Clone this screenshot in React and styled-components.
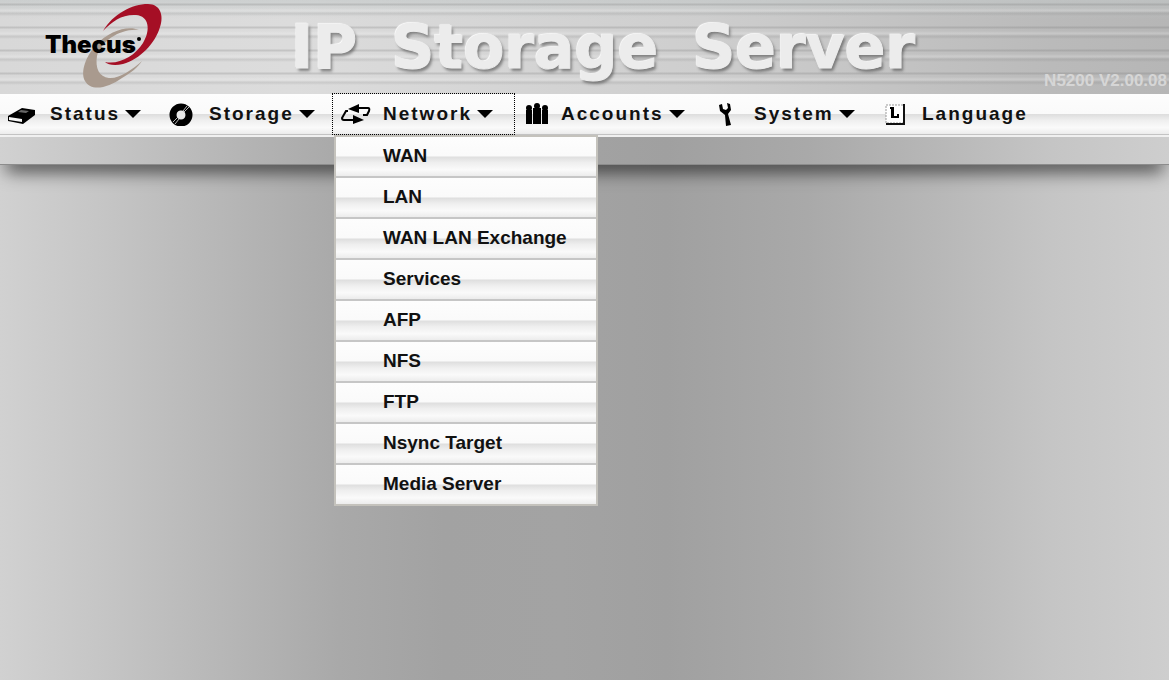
import React from "react"
import styled, { createGlobalStyle, css } from "styled-components"

const steel = css`
  background: linear-gradient(
    to right,
    #d1d1d1 0%,
    #c5c5c5 9%,
    #b4b4b4 21%,
    #a9a9a9 29%,
    #a2a2a2 38%,
    #a3a3a3 48%,
    #a0a0a0 57%,
    #a9a9a9 69%,
    #b7b7b7 80%,
    #c5c5c5 90%,
    #cecece 100%
  );
`

const glossy = css`
  background: linear-gradient(
    to bottom,
    #fdfdfd 0%,
    #fafafa 49%,
    #dedede 51%,
    #efefef 66%,
    #fafafa 84%,
    #ececec 100%
  );
`

const GlobalStyle = createGlobalStyle`
  * {
    box-sizing: border-box;
  }
  body {
    margin: 0;
    font-family: "Liberation Sans", Arial, sans-serif;
    color: #111;
  }
`

const StyledPage = styled.div`
  ${steel}
  min-height: 100vh;
`

const StyledBanner = styled.header`
  display: flex;
  align-items: stretch;
  min-height: 94px;
  padding: 0 2px 0 42px;
  overflow: hidden;
  background:
    repeating-linear-gradient(
      to bottom,
      transparent 0 3px,
      rgba(110, 110, 110, 0.22) 4px 5px,
      transparent 6px 8px,
      rgba(255, 255, 255, 0.18) 10px 11px,
      transparent 12px,
      rgba(110, 110, 110, 0.14) 13px 14px,
      transparent 16px 23px
    ),
    linear-gradient(to bottom, rgba(195, 200, 200, 0.6), transparent 20%),
    linear-gradient(to right, #d8d8d8, #dcdcdc 25%, #cecece 60%, #bababa 90%, #b6b6b6 100%);
`

const StyledLogo = styled.a`
  flex: none;
  width: 249px;
  color: #000;

  svg {
    display: block;
  }
`

const StyledTitle = styled.h1`
  display: flex;
  flex: 1;
  align-items: center;
  gap: 34px;
  margin: 0;
  font-family: "DejaVu Sans", "Arial Black", sans-serif;
  font-size: 60px;
  font-weight: bold;
  line-height: 94px;
  white-space: nowrap;
  color: #ececec;
  -webkit-text-stroke: 1px #ececec;
  text-shadow: 2px 3px 3px rgba(70, 70, 70, 0.6), -1px -1px 1px #fff;
`

const StyledVersion = styled.span`
  align-self: flex-end;
  padding-bottom: 4px;
  font-size: 17px;
  font-weight: bold;
  line-height: 18px;
  white-space: nowrap;
  color: #d6d6d6;
`

const StyledNav = styled.nav`
  border-bottom: 2px solid #f2f2f2;
`

const StyledMenu = styled.ul`
  ${glossy}
  display: flex;
  height: 41px;
  margin: 0;
  padding: 0;
  border-bottom: 1px solid #c4c4c4;
  list-style: none;
`

const StyledMenuItem = styled.li`
  position: relative;
  flex: none;
  width: ${({ $width }) => $width}px;
`

const StyledMenuButton = styled.button`
  display: flex;
  align-items: center;
  width: 100%;
  height: 40px;
  padding: 0 0 0 ${({ $inset }) => $inset}px;
  border: 0;
  background: none;
  font: bold 19px/40px "Liberation Sans", Arial, sans-serif;
  letter-spacing: 2px;
  white-space: nowrap;
  color: #111;
  outline: ${({ $open }) => ($open ? "1px dotted #000" : "none")};
`

const StyledIcon = styled.svg`
  flex: none;
  width: 30px;
  height: 24px;
  margin-right: ${({ $gap }) => $gap}px;
`

const StyledCaret = styled.span`
  margin-left: 5px;
  border: 8px solid transparent;
  border-top-color: #000;
  border-bottom: 0;
`

const StyledDropdown = styled.ul`
  position: absolute;
  z-index: 1;
  top: 41px;
  left: 1px;
  width: 264px;
  margin: 0;
  padding: 0;
  border: 2px solid #c4c2bc;
  list-style: none;
`

const StyledDropdownItem = styled.li`
  ${glossy}
  height: 41px;
  border-bottom: 2px solid #c6c6c6;

  &:last-child {
    height: 39px;
    border-bottom: 0;
  }
`

const StyledDropdownLink = styled.a`
  display: block;
  padding-left: 47px;
  font-size: 19px;
  font-weight: bold;
  line-height: 38px;
  white-space: nowrap;
  text-decoration: none;
  color: #111;
`

const StyledStrip = styled.div`
  ${steel}
  height: 28px;
  border-bottom: 1px solid #8c8c8c;
  box-shadow: 0 12px 18px -6px rgba(0, 0, 0, 0.7);
`

const Logo = () => (
  <svg width="130" height="94" viewBox="42 0 130 94" role="img" aria-label="Thecus">
    <path
      d="M139 30C128 25 109 31 96 45C86 56 80 72 85 81C91 92 108 88 122 78C131 73 138 67 142 61C133 69 119 79 109 78C99 77 95 68 97 56C101 41 121 28 139 30Z"
      fill="#a99a8e"
    />
    <path
      d="M103 31C113 14 132 4 148 4C160 4 164 15 160 27C155 44 140 59 123 64C115 66 108 65 105 62C119 65 135 56 143 43C151 30 149 16 136 15C123 14 112 21 103 31Z"
      fill="#a50f25"
    />
    <text
      x="45"
      y="53"
      fontFamily="Inter, Arial, sans-serif"
      fontSize="24"
      fontWeight="900"
    >
      Thecus
    </text>
    <circle cx="139" cy="39" r="2" />
  </svg>
)

const icons = {
  status: (
    <>
      <path d="M1 14L15 6L28 8V13L16 22L1 19Z" />
      <path d="M2 15L15 17V20L2 18Z" fill="#f5f5f5" />
      <path d="M14 8L22 9L19 11L11 10Z" fill="#666" />
    </>
  ),
  storage: (
    <>
      <circle cx="16" cy="13" r="8" fill="none" stroke="#000" strokeWidth="7" />
      <path d="M8 20L13 15M10 22L14 17M19 10L24 5M18 9L22 4" stroke="#bbb" />
      <circle cx="16" cy="13" r="4" fill="#e8e8e8" />
    </>
  ),
  network: (
    <>
      <path d="M14 6H27Q29 6 28 9L26 13H22" fill="none" stroke="#000" strokeWidth="2" />
      <path d="M7 7L18 2V11Z" />
      <path d="M7 9H5L1 16Q1 18 3 18H14" fill="none" stroke="#000" strokeWidth="2" />
      <path d="M23 18L12 13V22Z" />
    </>
  ),
  accounts: (
    <>
      <circle cx="7" cy="6" r="3" />
      <circle cx="15" cy="4" r="3" />
      <circle cx="23" cy="6" r="3" />
      <path d="M4 8H10V22H4ZM11 6H19V22H11ZM20 8H26V22H20Z" />
    </>
  ),
  system: (
    <path d="M9 3L12 2L13 7L16 8L18 6L17 1L20 2L21 8L18 12L21 23L16 24L15 13L10 9Z" />
  ),
  language: (
    <>
      <path d="M6 3H24V21H6Z" fill="#fff" stroke="#999" strokeDasharray="2 1" />
      <path d="M24 2V22H6" fill="none" stroke="#111" strokeWidth="2" />
      <path d="M12 5V15H18V12M10 6H14" fill="none" stroke="#000" strokeWidth="2" />
      <path d="M11 5H14V16H11Z" />
    </>
  ),
}

const menu = [
  { icon: "status", label: "Status", width: 165, inset: 7, gap: 13 },
  { icon: "storage", label: "Storage", width: 168, inset: 0, gap: 14 },
  {
    icon: "network",
    label: "Network",
    width: 181,
    inset: 8,
    gap: 12,
    open: true,
    items: [
      "WAN",
      "LAN",
      "WAN LAN Exchange",
      "Services",
      "AFP",
      "NFS",
      "FTP",
      "Nsync Target",
      "Media Server",
    ],
  },
  { icon: "accounts", label: "Accounts", width: 190, inset: 8, gap: 9 },
  { icon: "system", label: "System", width: 170, inset: 6, gap: 14 },
  { icon: "language", label: "Language", width: 170, inset: 6, gap: 12, plain: true },
]

const MenuItem = ({ icon, label, width, inset, gap, open, items, plain }) => (
  <StyledMenuItem $width={width}>
    <StyledMenuButton type="button" $inset={inset} $open={open} aria-expanded={open}>
      <StyledIcon viewBox="0 0 30 24" $gap={gap} aria-hidden="true">
        {icons[icon]}
      </StyledIcon>
      {label}
      {!plain && <StyledCaret />}
    </StyledMenuButton>
    {open && (
      <StyledDropdown>
        {items.map(item => (
          <StyledDropdownItem key={item}>
            <StyledDropdownLink href="#">{item}</StyledDropdownLink>
          </StyledDropdownItem>
        ))}
      </StyledDropdown>
    )}
  </StyledMenuItem>
)

const App = () => (
  <StyledPage>
    <GlobalStyle />
    <StyledBanner>
      <StyledLogo href="#">
        <Logo />
      </StyledLogo>
      <StyledTitle>
        <span>IP</span> <span>Storage</span> <span>Server</span>
      </StyledTitle>
      <StyledVersion>N5200 V2.00.08</StyledVersion>
    </StyledBanner>
    <StyledNav>
      <StyledMenu>
        {menu.map(entry => (
          <MenuItem key={entry.label} {...entry} />
        ))}
      </StyledMenu>
    </StyledNav>
    <StyledStrip />
  </StyledPage>
)

export default App
